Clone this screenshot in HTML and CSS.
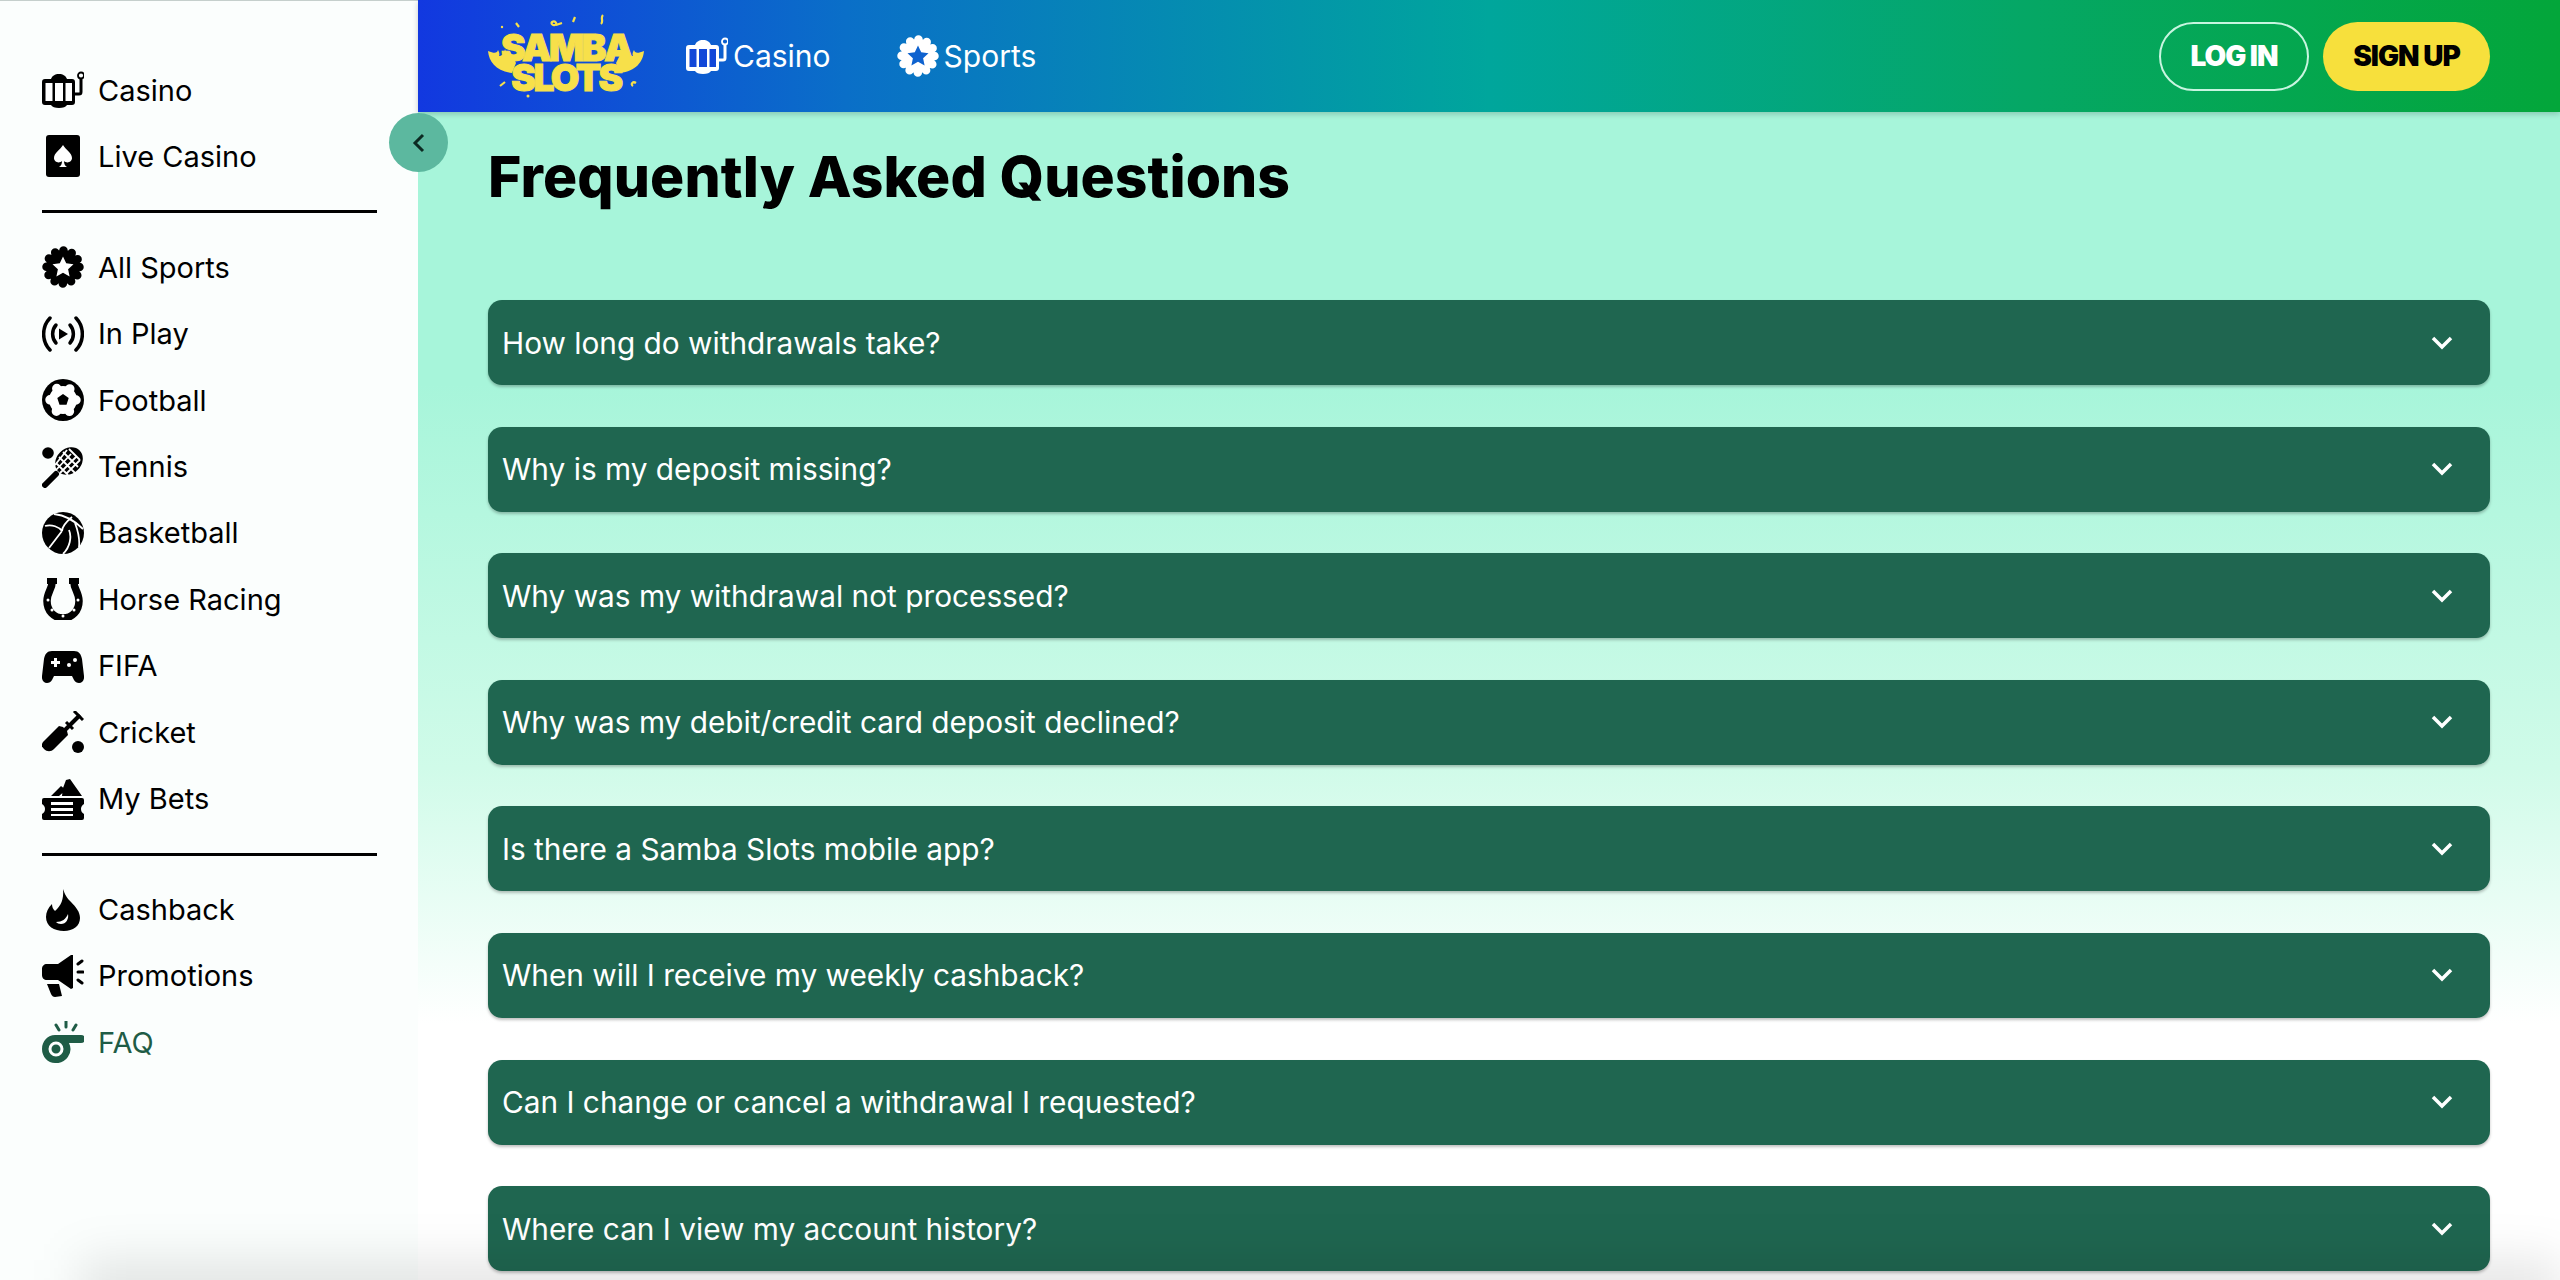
FILE: index.html
```html
<!DOCTYPE html>
<html lang="en">
<head>
    <meta charset="UTF-8">
    <meta name="viewport" content="width=device-width, initial-scale=1.0">
    <title>Samba Slots - FAQ</title>
    <link rel="stylesheet" href="styles.css">
</head>
<body>
    <svg class="sprites" width="0" height="0">
        <symbol id="i-casino" viewBox="0 0 42 42">
            <path d="M9 10c1-3 4-5 8-5s7 2 8 5h5a3 3 0 0 1 3 3v20a3 3 0 0 1-3 3h-5c-1 2-4 3-8 3s-7-1-8-3H3a3 3 0 0 1-3-3V13a3 3 0 0 1 3-3z" fill="currentColor"/>
            <path d="M3.5 14h7v18h-7zM13 14h8v18h-8zM23.5 14H30v18h-6.500z" class="knock"/>
            <path d="M33 25h4a2 2 0 0 0 2-2V10" fill="none" stroke="currentColor" stroke-width="3"/>
            <circle cx="39" cy="6.500" r="3" fill="none" stroke="currentColor" stroke-width="1.800"/>
        </symbol>
        <symbol id="i-star" viewBox="0 0 42 42">
            <circle cx="21" cy="21" r="17" fill="currentColor"/>
            <circle cx="21" cy="21" r="16.500" fill="none" stroke="currentColor" stroke-width="8.500" stroke-linecap="round" stroke-dasharray="0 8.64"/>
            <path d="M21 10.5l3.200 6.800 7.300.9-5.400 5 1.500 7.300-6.600-3.700-6.600 3.700 1.500-7.300-5.400-5 7.300-.9z" class="knock"/>
        </symbol>
    </svg>

    <div class="page">
        <aside class="sidebar">
            <nav class="side-group">
                <a class="side-link"><svg class="side-icon"><use href="#i-casino"/></svg>Casino</a>
                <a class="side-link">
                    <svg class="side-icon" viewBox="0 0 42 42">
                        <rect x="4" y="0" width="34" height="42" rx="3" fill="currentColor"/>
                        <path d="M21 10c3 5 9 8 9 13 0 4-5 6-8 3 0 3 1 5 3 6h-8c2-1 3-3 3-6-3 3-8 1-8-3 0-5 6-8 9-13z" fill="#fff"/>
                    </svg>
                    Live Casino
                </a>
            </nav>
            <hr class="side-rule">
            <nav class="side-group">
                <a class="side-link"><svg class="side-icon"><use href="#i-star"/></svg>All Sports</a>
                <a class="side-link">
                    <svg class="side-icon" viewBox="0 0 42 42" fill="none" stroke="currentColor" stroke-width="3.500" stroke-linecap="round">
                        <path d="M8 5C-.5 14-.5 28 8 37M34 5c8.500 9 8.500 23 0 32"/>
                        <path d="M14 12c-4.500 5-4.500 13 0 18M28 12c4.500 5 4.500 13 0 18"/>
                        <path d="M17 15.500l9 5.500-9 5.500z" fill="currentColor" stroke="none"/>
                    </svg>
                    In Play
                </a>
                <a class="side-link">
                    <svg class="side-icon" viewBox="0 0 42 42">
                        <circle cx="21" cy="21" r="21" fill="currentColor"/>
                        <circle cx="21" cy="21" r="14" fill="#fff"/>
                        <circle cx="21" cy="21" r="13" fill="none" stroke="#fff" stroke-width="9.500" stroke-linecap="round" stroke-dasharray="0 13.6"/>
                        <path d="M21 15l5.700 4.100-2.200 6.700h-7l-2.200-6.700z" fill="currentColor"/>
                    </svg>
                    Football
                </a>
                <a class="side-link">
                    <svg class="side-icon" viewBox="0 0 42 42">
                        <circle cx="6" cy="7" r="5.800" fill="currentColor"/>
                        <path d="M3 39L14 28" stroke="currentColor" stroke-width="6" stroke-linecap="round"/>
                        <ellipse cx="27" cy="15" rx="15" ry="12.500" transform="rotate(-45 27 15)" fill="currentColor"/>
                        <path d="M17 11l17 17M21 6l15 15M27 3l11 11M14 17l12 12M14 24L29 8M18 27L35 10M24 28L38 14M13 19l12-15" stroke="#fff" stroke-width="1.800"/>
                    </svg>
                    Tennis
                </a>
                <a class="side-link">
                    <svg class="side-icon" viewBox="0 0 42 42">
                        <circle cx="21" cy="21" r="21" fill="currentColor"/>
                        <path d="M3 14c7-2 14 1 17 5M12 2c10 1 20 6 29 15M20 19L7 36M30 5c-6 5-10 9-10 14M27 18c3 7 1 17-6 24M33 11c3 8 5 16 4 24" fill="none" stroke="#fff" stroke-width="1.800"/>
                    </svg>
                    Basketball
                </a>
                <a class="side-link">
                    <svg class="side-icon" viewBox="0 0 42 42">
                        <path d="M10 3C11 10 5 14 5 23c0 10 7 17 16 17s16-7 16-17c0-9-6-13-5-20" fill="none" stroke="currentColor" stroke-width="7.500"/>
                        <path d="M5 0h10v6H5zM27 0h10v6H27z" fill="currentColor"/>
                        <g fill="#fff"><circle cx="6" cy="22" r="1.500"/><circle cx="10" cy="32" r="1.500"/><circle cx="21" cy="38" r="1.500"/><circle cx="32" cy="32" r="1.500"/><circle cx="36" cy="22" r="1.500"/></g>
                    </svg>
                    Horse Racing
                </a>
                <a class="side-link">
                    <svg class="side-icon" viewBox="0 0 42 42">
                        <path d="M10 6h22c5 0 7 3 8 8l2 17c.5 5-2 7-5 7-2 0-4-1-5-3l-2-4H12l-2 4c-1 2-3 3-5 3-3 0-5.500-2-5-7l2-17c1-5 3-8 8-8z" fill="currentColor"/>
                        <path d="M12 13h3v3h3v3h-3v3h-3v-3H9v-3h3z" fill="#fff"/>
                        <circle cx="27" cy="20" r="2" fill="#fff"/><circle cx="33" cy="15" r="2" fill="#fff"/>
                    </svg>
                    FIFA
                </a>
                <a class="side-link">
                    <svg class="side-icon" viewBox="0 0 42 42">
                        <path d="M1 31L17 15l4 1 4 4 1 4-14 14c-3 3-7 3-10 0s-3-4-1-7z" fill="currentColor"/>
                        <path d="M22 20L38 4" stroke="currentColor" stroke-width="4"/>
                        <path d="M32 0l9 9" stroke="currentColor" stroke-width="3"/>
                        <path d="M24 11l7 7" stroke="currentColor" stroke-width="3"/>
                        <circle cx="36" cy="36" r="6" fill="currentColor"/>
                    </svg>
                    Cricket
                </a>
                <a class="side-link">
                    <svg class="side-icon" viewBox="0 0 42 42">
                        <path d="M9 18L19 8l5 4-7 6zM21 10l3-8 4-1 12 17H20z" fill="currentColor"/>
                        <path d="M2 20h38a2 2 0 0 1 2 2v4c-2 1-3 3-3 5s1 4 3 5v4a2 2 0 0 1-2 2H2a2 2 0 0 1-2-2v-4c2-1 3-3 3-5s-1-4-3-5v-4a2 2 0 0 1 2-2z" fill="currentColor"/>
                        <path d="M9 24h22v3H9zM9 30h22v3H9zM9 36h22v2H9z" fill="#fff"/>
                    </svg>
                    My Bets
                </a>
            </nav>
            <hr class="side-rule">
            <nav class="side-group">
                <a class="side-link">
                    <svg class="side-icon" viewBox="0 0 42 42">
                        <path d="M21 0c2 6 4 9 8 13 5 5 9 10 9 16 0 8-7 13-16 13C12 42 4 37 4 28c0-5 2-9 6-13 0 3 1 5 3 7 6-5 9-12 8-22z" fill="currentColor"/>
                        <path d="M26 25c1 5-2 10-7 10-2 0-4-1-5-2 6 0 10-3 12-8z" fill="#fff"/>
                    </svg>
                    Cashback
                </a>
                <a class="side-link">
                    <svg class="side-icon" viewBox="0 0 42 42">
                        <path d="M31 0v33l-2 1-13-9H5c-3 0-5-2-5-5v-6c0-3 2-5 5-5h11l13-9z" fill="currentColor"/>
                        <path d="M5 29h12l3 12-7 1c-2 0-3-1-4-3z" fill="currentColor"/>
                        <path d="M36 9l4-3M36 17h5M36 25l4 3" stroke="currentColor" stroke-width="3" stroke-linecap="round"/>
                    </svg>
                    Promotions
                </a>
                <a class="side-link side-link-active">
                    <svg class="side-icon" viewBox="0 0 42 42">
                        <path d="M13 14h26a3 3 0 0 1 0 8H27a14 14 0 0 1-14 20C6 42 0 36 0 28s6-14 13-14z" fill="currentColor"/>
                        <circle cx="14" cy="28" r="6" fill="none" stroke="#fff" stroke-width="3"/>
                        <path d="M24 0v6M14 4l3 5M34 4l-3 5" stroke="currentColor" stroke-width="3" stroke-linecap="round"/>
                    </svg>
                    FAQ
                </a>
            </nav>
        </aside>

        <button class="side-toggle">
            <svg viewBox="0 0 14 22" width="14" height="22"><path d="M11 3L3 11l8 8" fill="none" stroke="#0c2a22" stroke-width="3"/></svg>
        </button>

        <div class="content">
            <header class="topbar">
                <a class="logo">
                    <svg class="logo-wings" viewBox="0 0 156 84">
                        <path d="M0 37c1 11 8 20 24 22l4-10-6-12c0 3-2 6-5 6 2-3 1-5 0-8-1 5-3 7-6 7 1-2 0-4-1-6-1 3-3 4-10 1zM156 37c-1 11-8 20-24 22l-4-10 6-12c0 3 2 6 5 6-2-3-1-5 0-8 1 5 3 7 6 7-1-2 0-4 1-6 1 3 3 4 10 1z" fill="#f7e04a"/>
                        <path d="M28 9l3 4M64 8c3-2 6 2 3 3s-4-2-3-3zM68 11l6-2M87 3l-2 5M115 1c-3 3 1 6-2 9M12 72l5-4M148 69c-3-2-6 1-3 3" stroke="#f7e04a" stroke-width="2.200" fill="none"/>
                        <circle cx="14" cy="13" r="1.200" fill="#f7e04a"/>
                        <circle cx="40" cy="82" r="1.500" fill="#f7e04a"/>
                    </svg>
                    <span class="logo-word">SAMBA</span>
                    <span class="logo-word">SLOTS</span>
                </a>
                <nav class="top-nav">
                    <a class="top-link top-link-casino"><svg class="top-icon"><use href="#i-casino"/></svg>Casino</a>
                    <a class="top-link top-link-sports"><svg class="top-icon"><use href="#i-star"/></svg>Sports</a>
                </nav>
                <div class="auth">
                    <button class="btn btn-login">LOG IN</button>
                    <button class="btn btn-signup">SIGN UP</button>
                </div>
            </header>

            <main class="faq">
                <h1>Frequently Asked Questions</h1>
                <div class="faq-list">
                    <div class="faq-item">How long do withdrawals take?<svg class="chev" viewBox="0 0 22 14"><path d="M2 2l9 9 9-9"/></svg></div>
                    <div class="faq-item">Why is my deposit missing?<svg class="chev" viewBox="0 0 22 14"><path d="M2 2l9 9 9-9"/></svg></div>
                    <div class="faq-item">Why was my withdrawal not processed?<svg class="chev" viewBox="0 0 22 14"><path d="M2 2l9 9 9-9"/></svg></div>
                    <div class="faq-item">Why was my debit/credit card deposit declined?<svg class="chev" viewBox="0 0 22 14"><path d="M2 2l9 9 9-9"/></svg></div>
                    <div class="faq-item">Is there a Samba Slots mobile app?<svg class="chev" viewBox="0 0 22 14"><path d="M2 2l9 9 9-9"/></svg></div>
                    <div class="faq-item">When will I receive my weekly cashback?<svg class="chev" viewBox="0 0 22 14"><path d="M2 2l9 9 9-9"/></svg></div>
                    <div class="faq-item">Can I change or cancel a withdrawal I requested?<svg class="chev" viewBox="0 0 22 14"><path d="M2 2l9 9 9-9"/></svg></div>
                    <div class="faq-item">Where can I view my account history?<svg class="chev" viewBox="0 0 22 14"><path d="M2 2l9 9 9-9"/></svg></div>
                </div>
            </main>
        </div>
        <div class="bottom-shade"></div>
    </div>
</body>
</html>
```

FILE: styles.css
```css
* {
    box-sizing: border-box;
}
html, body {
    margin: 0;
    padding: 0;
    height: 100%;
    overflow: hidden;
}
body {
    font-family: "Inter", "Open Sans", sans-serif;
    color: #000;
    background-color: #fff;
}
a {
    color: inherit;
    text-decoration: none;
}
.sprites {
    position: absolute;
}
.knock {
    fill: var(--knock, #fff);
}
.page {
    position: relative;
    display: flex;
    height: 1280px;
    overflow: hidden;
}

/* sidebar */
.sidebar {
    width: 418px;
    flex-shrink: 0;
    padding: 68px 41px 0 42px;
    border-top: 1px solid #c5cfcc;
    background-color: #fbfefd;
}
.side-group {
    display: flex;
    flex-direction: column;
    gap: 24.4px;
}
.side-link {
    display: flex;
    align-items: center;
    gap: 14px;
    height: 42px;
    font-size: 29px;
}
.side-link-active {
    color: #1f5c46;
}
.side-icon {
    width: 42px;
    height: 42px;
    flex-shrink: 0;
}
.side-rule {
    height: 3px;
    margin: 33px 0;
    border: 0;
    background-color: #000;
}
.side-toggle {
    position: absolute;
    left: 389px;
    top: 113px;
    display: flex;
    align-items: center;
    justify-content: center;
    width: 59px;
    height: 59px;
    padding: 0;
    border: 0;
    border-radius: 50%;
    background-color: #5cb89f;
}

/* header */
.content {
    flex-grow: 1;
    display: flex;
    flex-direction: column;
    min-width: 0;
    background: linear-gradient(180deg, #a7f5da 0%, #a7f5da 30%, #d0fbe9 60%, #fff 80%);
}
.topbar {
    display: flex;
    align-items: center;
    height: 112px;
    flex-shrink: 0;
    padding: 0 70px;
    background: linear-gradient(90deg, #1238e0 0%, #0a6fc8 20%, #00a69c 50%, #05a765 75%, #03a63a 100%);
    box-shadow: 0 2px 6px rgba(0, 0, 0, 0.2);
}
.logo {
    position: relative;
    display: flex;
    flex-direction: column;
    align-items: center;
    justify-content: center;
    width: 156px;
    height: 84px;
    padding-top: 13px;
    color: #f7e04a;
    font-weight: 900;
    font-size: 37px;
    line-height: 30px;
    letter-spacing: -2.5px;
    -webkit-text-stroke: 1px #f7e04a;
}
.logo-wings {
    position: absolute;
    left: 0;
    top: 0;
    width: 156px;
    height: 84px;
}
.logo-word {
    position: relative;
}
.top-nav {
    display: flex;
    gap: 66px;
    margin-left: 42px;
}
.top-link {
    display: flex;
    align-items: center;
    gap: 5px;
    color: #fff;
    font-size: 30px;
}
.top-link-casino {
    --knock: #1247d8;
}
.top-link-sports {
    --knock: #0e62cf;
}
.top-icon {
    width: 42px;
    height: 42px;
}
.auth {
    display: flex;
    gap: 14px;
    margin-left: auto;
}
.btn {
    height: 69px;
    padding: 0;
    border-radius: 35px;
    font-family: inherit;
    font-size: 28px;
    font-weight: 900;
    letter-spacing: -1px;
}
.btn-login {
    width: 150px;
    border: 2px solid #c8f5e0;
    background: transparent;
    color: #fff;
}
.btn-signup {
    width: 167px;
    border: 0;
    background-color: #f7e03c;
    color: #000;
}

/* faq */
.faq {
    padding: 29px 70px 0;
}
.faq h1 {
    margin: 0 0 87px;
    font-size: 57px;
    line-height: 72px;
    font-weight: 800;
    letter-spacing: 0.1px;
}
.faq-list {
    display: flex;
    flex-direction: column;
    gap: 41.6px;
}
.faq-item {
    display: flex;
    align-items: center;
    justify-content: space-between;
    height: 85px;
    padding: 0 37px 0 14px;
    border-radius: 14px;
    background-color: #1f6650;
    box-shadow: 0 2px 3px rgba(0, 0, 0, 0.25);
    color: #fff;
    font-size: 29.8px;
}
.chev {
    width: 22px;
    height: 14px;
    fill: none;
    stroke: #fff;
    stroke-width: 3.5;
}
.bottom-shade {
    position: absolute;
    left: 80px;
    right: 0;
    bottom: -40px;
    height: 60px;
    background-color: rgba(0, 0, 0, 0.1);
    filter: blur(24px);
    pointer-events: none;
}
```
